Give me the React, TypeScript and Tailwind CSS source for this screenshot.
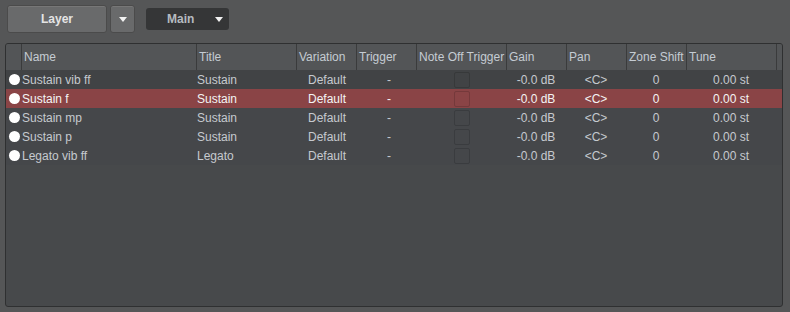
const font = { fontFamily: '"Liberation Sans", Arial, sans-serif' };

const cols = [
  { key: "name", label: "Name", w: "w-[175px]" },
  { key: "title", label: "Title", w: "w-[100px]" },
  { key: "variation", label: "Variation", w: "w-[60px]" },
  { key: "trigger", label: "Trigger", w: "w-[60px]" },
  { key: "noteOff", label: "Note Off Trigger", w: "w-[90px]" },
  { key: "gain", label: "Gain", w: "w-[60px]" },
  { key: "pan", label: "Pan", w: "w-[60px]" },
  { key: "zone", label: "Zone Shift", w: "w-[60px]" },
  { key: "tune", label: "Tune", w: "w-[90px]" },
];

const rows = [
  { name: "Sustain vib ff", title: "Sustain" },
  { name: "Sustain f", title: "Sustain", selected: true },
  { name: "Sustain mp", title: "Sustain" },
  { name: "Sustain p", title: "Sustain" },
  { name: "Legato vib ff", title: "Legato" },
];

function Caret() {
  return (
    <svg width="8" height="5" viewBox="0 0 8 5">
      <polygon points="0,0 8,0 4,5" fill="#f2f2f2" />
    </svg>
  );
}

function Row({ name, title, selected, index }: { name: string; title: string; selected?: boolean; index: number }) {
  const bg = selected ? "bg-[#8a4446]" : index === 0 ? "bg-[#414345]" : "bg-[#45474a]";
  const text = selected ? "text-[#f4f4f4]" : "text-[#c6cacf]";
  return (
    <div className={`flex h-[19px] items-center text-[12px] ${bg} ${text}`}>
      <div className="flex w-[15px] justify-center pl-[1px]">
        <div className="h-[11px] w-[11px] rounded-full bg-white" />
      </div>
      <div className="w-[175px] truncate pl-[1px]">{name}</div>
      <div className="w-[100px] pl-[1px]">{title}</div>
      <div className="w-[60px] pl-[2px] text-center">Default</div>
      <div className="w-[60px] pl-[6px] text-center">-</div>
      <div className="flex w-[90px] justify-center pl-[1px]">
        <div className="h-[16px] w-[16px] rounded-[2px] border border-black/15" />
      </div>
      <div className="w-[60px] text-center">-0.0 dB</div>
      <div className="w-[60px] text-center">&lt;C&gt;</div>
      <div className="w-[60px] text-center">0</div>
      <div className="w-[90px] text-center">0.00 st</div>
      <div className="flex-1" />
    </div>
  );
}

export default function App() {
  return (
    <div className="flex h-[312px] w-[790px] flex-col bg-[#555657]" style={font}>
      <div className="flex items-start pl-[7px] pt-[5px]">
        <button className="h-[28px] w-[100px] rounded-[3px] border border-[#4b4b4b] bg-[#696a6b] text-[12px] font-bold text-[#e4e4e4] shadow-[inset_0_1px_0_#777]">
          Layer
        </button>
        <button className="ml-[3px] flex h-[28px] w-[25px] items-center justify-center rounded-[3px] border border-[#4b4b4b] bg-[#696a6b] shadow-[inset_0_1px_0_#777]">
          <Caret />
        </button>
        <div className="ml-[11px] mt-[3px] flex h-[22px] w-[83px] items-center rounded-[3px] bg-[#353637] pl-[21px] pr-[6px] text-[12px] font-bold text-[#b6bbc0]">
          <span className="flex-1">Main</span>
          <Caret />
        </div>
      </div>

      <div className="ml-[5px] mt-[10px] flex h-[264px] w-[778px] flex-col overflow-hidden rounded-[3px] border border-[#2f3031] bg-[#47494b]">
        <div className="flex h-[26px] bg-[#535557] text-[12px] text-[#c5ccd3]">
          <div className="w-[15px]" />
          {cols.map((c) => (
            <div key={c.key} className={`${c.w} flex items-center whitespace-nowrap border-l border-[#3a3b3c] pl-[2px]`}>
              {c.label}
            </div>
          ))}
          <div className="flex-1 border-l border-[#3a3b3c]" />
        </div>
        {rows.map((r, i) => (
          <Row key={r.name} index={i} {...r} />
        ))}
      </div>
    </div>
  );
}
